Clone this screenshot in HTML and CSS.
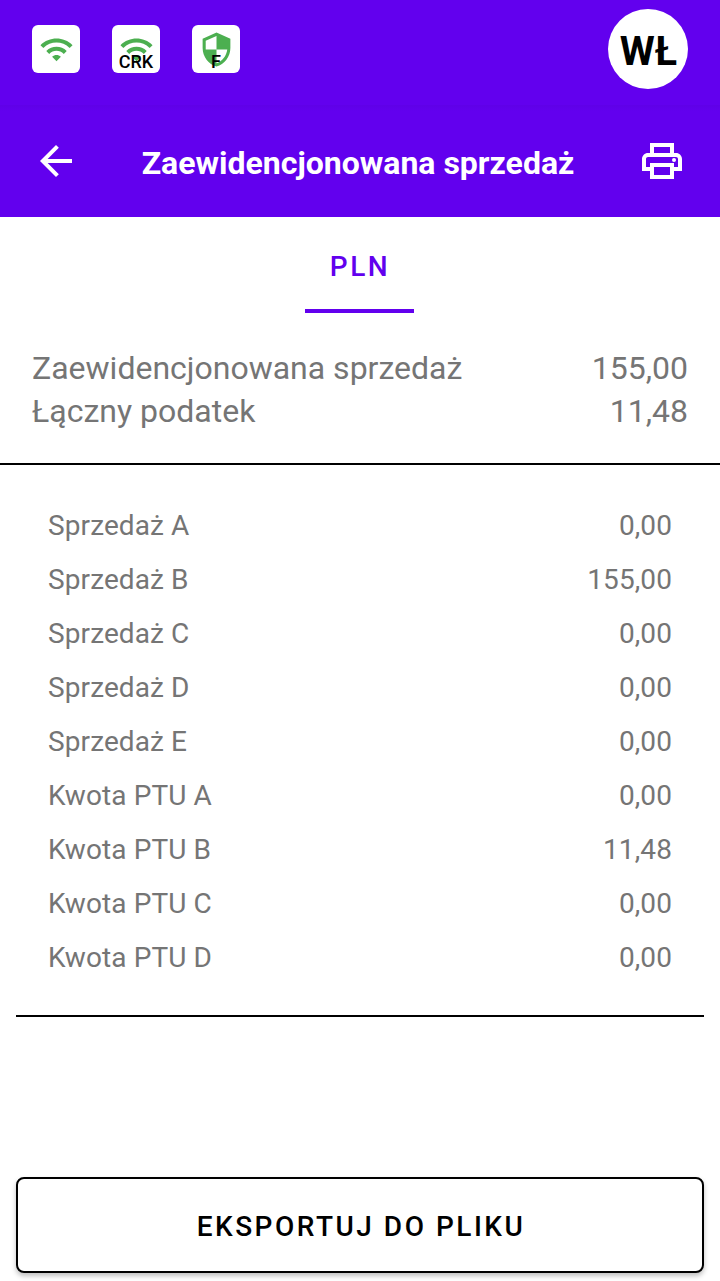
FILE: index.html
```html
<!DOCTYPE html>
<html lang="pl">
<head>
    <meta charset="UTF-8">
    <meta name="viewport" content="width=device-width, initial-scale=1.0">
    <title>Zaewidencjonowana sprzedaż</title>
    <link rel="stylesheet" href="styles.css">
</head>
<body>
    <header class="status-bar">
        <div class="status-icons">
            <div class="status-icon">
                <svg class="wifi" viewBox="0 0 24 24"><path d="M1 9l2 2c4.97-4.97 13.03-4.97 18 0l2-2C16.93 2.93 7.08 2.93 1 9zm8 8l3 3 3-3c-1.65-1.66-4.34-1.66-6 0zm-4-4l2 2c2.76-2.76 7.24-2.76 10 0l2-2C15.14 9.14 8.87 9.14 5 13z"/></svg>
            </div>
            <div class="status-icon">
                <svg class="wifi" viewBox="0 0 24 24"><path d="M1 9l2 2c4.97-4.97 13.03-4.97 18 0l2-2C16.93 2.93 7.08 2.93 1 9zm8 8l3 3 3-3c-1.65-1.66-4.34-1.66-6 0zm-4-4l2 2c2.76-2.76 7.24-2.76 10 0l2-2C15.14 9.14 8.87 9.14 5 13z"/></svg>
                <span class="status-label">CRK</span>
            </div>
            <div class="status-icon">
                <svg class="shield" viewBox="0 0 24 24"><path d="M12 1L3 5v6c0 5.55 3.84 10.74 9 12 5.16-1.26 9-6.45 9-12V5l-9-4zm0 10.99h7c-.53 4.12-3.28 7.79-7 8.94V12H5V6.3l7-3.11v8.8z"/></svg>
                <span class="status-label">F</span>
            </div>
        </div>
        <div class="avatar">WŁ</div>
    </header>

    <nav class="toolbar">
        <button class="icon-button" aria-label="Wstecz">
            <svg viewBox="0 0 24 24"><path d="M20 11H7.83l5.59-5.59L12 4l-8 8 8 8 1.41-1.41L7.83 13H20v-2z"/></svg>
        </button>
        <h1 class="title">Zaewidencjonowana sprzedaż</h1>
        <button class="icon-button" aria-label="Drukuj">
            <svg viewBox="0 0 24 24"><path d="M19 8h-1V3H6v5H5c-1.66 0-3 1.34-3 3v6h4v4h12v-4h4v-6c0-1.66-1.34-3-3-3zM8 5h8v3H8V5zm8 14H8v-4h8v4zm2-4v-2H6v2H4v-4c0-.55.45-1 1-1h14c.55 0 1 .45 1 1v4h-2z"/><circle cx="18" cy="11.5" r="1"/></svg>
        </button>
    </nav>

    <div class="tabs">
        <button class="tab">PLN</button>
    </div>

    <section class="summary">
        <div class="summary-row"><span>Zaewidencjonowana sprzedaż</span><span>155,00</span></div>
        <div class="summary-row"><span>Łączny podatek</span><span>11,48</span></div>
    </section>

    <section class="details">
        <div class="details-row"><span>Sprzedaż A</span><span>0,00</span></div>
        <div class="details-row"><span>Sprzedaż B</span><span>155,00</span></div>
        <div class="details-row"><span>Sprzedaż C</span><span>0,00</span></div>
        <div class="details-row"><span>Sprzedaż D</span><span>0,00</span></div>
        <div class="details-row"><span>Sprzedaż E</span><span>0,00</span></div>
        <div class="details-row"><span>Kwota PTU A</span><span>0,00</span></div>
        <div class="details-row"><span>Kwota PTU B</span><span>11,48</span></div>
        <div class="details-row"><span>Kwota PTU C</span><span>0,00</span></div>
        <div class="details-row"><span>Kwota PTU D</span><span>0,00</span></div>
    </section>

    <button class="export-button">EKSPORTUJ DO PLIKU</button>
</body>
</html>
```
FILE: styles.css
```css
* {
    margin: 0;
    padding: 0;
    box-sizing: border-box;
}

:root {
    --primary: #6200ee;
    --green: #4caf50;
    --text: #757575;
}

body {
    height: 1281px;
    display: flex;
    flex-direction: column;
    overflow: hidden;
    background-color: #fff;
    color: var(--text);
    font-family: Roboto, "Liberation Sans", sans-serif;
}

button {
    border: none;
    background: none;
    font-family: inherit;
}

.status-bar {
    height: 105px;
    padding: 9px 32px 0;
    display: flex;
    justify-content: space-between;
    background-color: var(--primary);
}

.status-icons {
    display: flex;
    gap: 32px;
    padding-top: 16px;
}

.status-icon {
    position: relative;
    width: 48px;
    height: 48px;
    display: flex;
    justify-content: center;
    background-color: #fff;
    border-radius: 6px;
    fill: var(--green);
}

.wifi {
    width: 35px;
    height: 35px;
    margin-top: 7px;
}

.shield {
    width: 37px;
    height: 37px;
    margin-top: 6px;
}

.status-label {
    position: absolute;
    left: 0;
    right: 0;
    bottom: 1px;
    color: #000;
    font-size: 18px;
    font-weight: 500;
    line-height: 20px;
    text-align: center;
}

.avatar {
    width: 80px;
    height: 80px;
    padding-left: 1px;
    border-radius: 50%;
    background-color: #fff;
    color: #000;
    font-size: 40px;
    font-weight: 700;
    line-height: 86px;
    text-align: center;
}

.toolbar {
    height: 112px;
    padding: 0 34px 0 32px;
    display: flex;
    align-items: center;
    justify-content: space-between;
    background: linear-gradient(#5f00e7, var(--primary) 6px);
    fill: #fff;
}

.icon-button {
    width: 48px;
    height: 48px;
}

.icon-button svg {
    display: block;
    width: 48px;
    height: 48px;
}

.title {
    padding: 4px 2px 0 0;
    color: #fff;
    font-size: 32px;
    font-weight: 700;
    line-height: 40px;
}

.tabs {
    height: 96px;
    padding-right: 1px;
    display: flex;
    justify-content: center;
}

.tab {
    width: 109px;
    padding: 6px 0 0 1px;
    border-bottom: 4px solid var(--primary);
    color: var(--primary);
    font-size: 28px;
    font-weight: 500;
    letter-spacing: 2.5px;
}

.summary {
    height: 152px;
    padding: 34px 32px 0;
    border-bottom: 2px solid #000;
}

.summary-row {
    display: flex;
    justify-content: space-between;
    font-size: 32px;
    line-height: 43px;
}

.details {
    height: 552px;
    margin: 0 16px;
    padding: 34px 32px 0;
    border-bottom: 2px solid #000;
}

.details-row {
    display: flex;
    justify-content: space-between;
    font-size: 28px;
    line-height: 54px;
    letter-spacing: 0.1px;
}

.export-button {
    height: 96px;
    margin: auto 16px 8px;
    padding: 2px 0 0 2px;
    border: 2px solid #000;
    border-radius: 8px;
    background-color: #fff;
    box-shadow: 0 3px 5px rgba(0, 0, 0, 0.25);
    color: #000;
    font-size: 28px;
    font-weight: 500;
    letter-spacing: 2.5px;
}
```
